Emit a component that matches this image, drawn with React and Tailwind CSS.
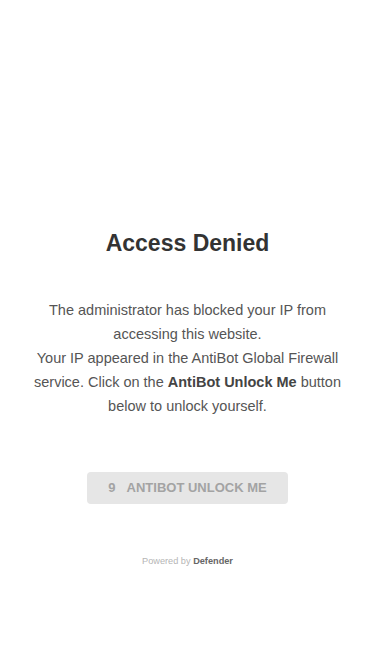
export default function App() {
  return (
    <div
      className="min-h-screen bg-white flex flex-col items-center text-center px-6 pt-[229px]"
      style={{ fontFamily: '"Liberation Sans", Arial, sans-serif' }}
    >
      <h1 className="text-[23px] leading-[28px] font-bold text-[#333333]">Access Denied</h1>
      <p className="mt-[41px] text-[14.5px] leading-[24px] text-[#555555]">
        The administrator has blocked your IP from accessing this website.
        <br />
        Your IP appeared in the AntiBot Global Firewall service. Click on the{' '}
        <strong className="font-bold text-[#444444]">AntiBot Unlock Me</strong> button below to unlock yourself.
      </p>
      <button className="mt-[54px] w-[201px] h-[32px] rounded bg-[#e6e6e6] text-[#a3a3a3] text-[13px] font-bold uppercase flex items-center justify-center gap-[11px]">
        <span>9</span>
        <span>AntiBot Unlock Me</span>
      </button>
      <div className="mt-[51px] text-[9.2px] text-[#b5b5b5]">
        Powered by <span className="font-bold text-[#666666]">Defender</span>
      </div>
    </div>
  );
}
